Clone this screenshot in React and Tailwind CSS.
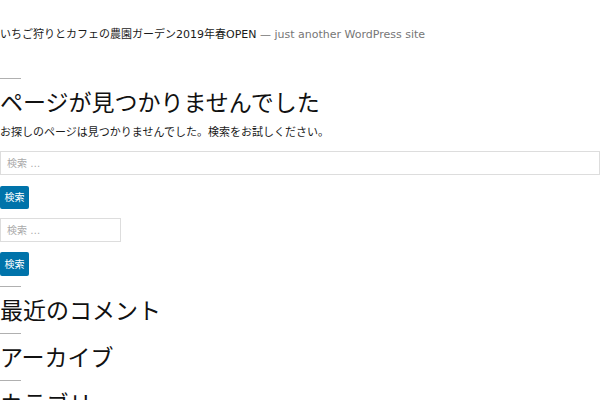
export default function App() {
  const font = { fontFamily: '"DejaVu Sans", "Noto Sans CJK JP", sans-serif' };
  const Hr = ({ cls = "" }) => <div className={"w-[21px] h-px bg-[#b0b0b0] " + cls} />;
  const H = ({ children, cls = "" }) => (
    <h2 className={"text-[23px] leading-[30px] text-[#111] font-normal " + cls}>{children}</h2>
  );
  return (
    <div className="w-[600px] h-[400px] overflow-hidden bg-white" style={font}>
      <div className="pt-[25px] text-[11px] leading-[20px] text-[#1a1a1a] whitespace-nowrap">
        いちご狩りとカフェの農園ガーデン2019年春OPEN <span className="text-[#767676]">— just another WordPress site</span>
      </div>
      <Hr cls="mt-[33px]" />
      <H cls="mt-[9px]">ページが見つかりませんでした</H>
      <p className="mt-[7px] text-[11px] leading-[16px] text-[#1a1a1a]">
        お探しのページは見つかりませんでした。検索をお試しください。
      </p>
      <div className="mt-[10px] h-[24px] w-[600px] border border-[#ddd] flex items-center px-[6px] text-[10px] text-[#aaa]">
        検索 …
      </div>
      <div className="mt-[11px] h-[23px] w-[29px] rounded-[2px] bg-[#0073aa] flex items-center justify-center text-[10px] text-white">
        検索
      </div>
      <div className="mt-[9px] h-[24px] w-[121px] border border-[#ddd] flex items-center px-[6px] text-[10px] text-[#aaa]">
        検索 …
      </div>
      <div className="mt-[10px] h-[24px] w-[29px] rounded-[2px] bg-[#0073aa] flex items-center justify-center text-[10px] text-white">
        検索
      </div>
      <Hr cls="mt-[10px]" />
      <H cls="mt-[9px]">最近のコメント</H>
      <Hr cls="mt-[7px]" />
      <H cls="mt-[9px]">アーカイブ</H>
      <Hr cls="mt-[7px]" />
      <H cls="mt-[8px]">カテゴリー</H>
    </div>
  );
}
